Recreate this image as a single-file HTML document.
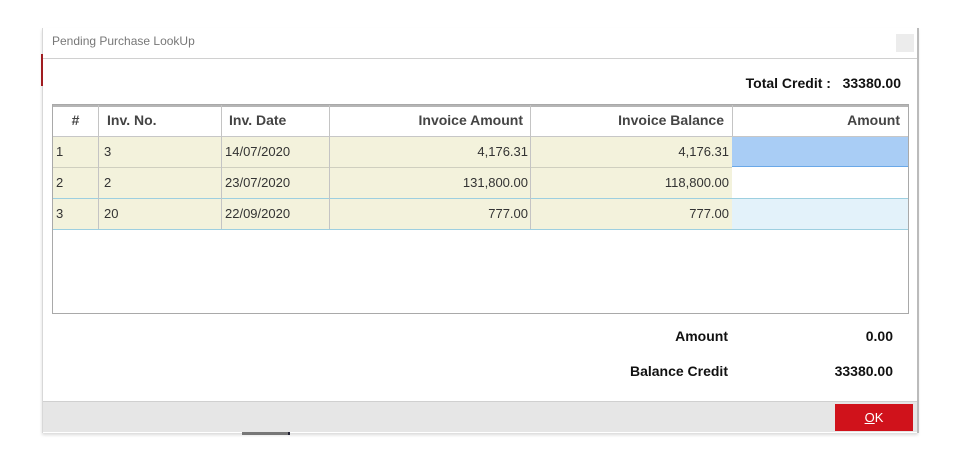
<!DOCTYPE html>
<html><head><meta charset="utf-8"><style>
*{margin:0;padding:0;box-sizing:border-box}
body{width:961px;height:462px;background:#fff;position:relative;overflow:hidden;font-family:"Liberation Sans",Arial,sans-serif}
.a{position:absolute}
.t{font-size:13px;color:#333;line-height:31px;white-space:nowrap}
.h{font-size:14px;font-weight:bold;color:#444;line-height:31px}
.b{font-weight:bold;font-size:14px;color:#111}
</style></head><body>
<!-- dialog -->
<div class="a" style="left:42px;top:28px;width:876px;height:405px;background:#fff;border-left:1px solid #d8d8d8;border-right:1px solid #cfcfcf;box-shadow:0 2px 3px rgba(0,0,0,.15)"></div>
<div class="a" style="left:41px;top:54px;width:2px;height:32px;background:#a01c20"></div>
<div class="a" style="left:52px;top:34px;font-size:12px;color:#777">Pending Purchase LookUp</div>
<div class="a" style="left:896px;top:34px;width:18px;height:18px;background:#ececec"></div>
<div class="a" style="left:43px;top:58px;width:874px;height:1px;background:#d0d0d0"></div>
<div class="a" style="left:917px;top:28px;width:2px;height:405px;background:#bbb"></div>
<div class="a b" style="right:60px;top:75px">Total Credit :&nbsp;&nbsp;&nbsp;33380.00</div>

<!-- table -->
<div class="a" style="left:52px;top:104px;width:857px;height:210px;border:1px solid #a9a9a9;background:#fff"></div>
<div class="a" style="left:53px;top:105px;width:855px;height:2px;background:#b5b5b5"></div>
<!-- rows backgrounds -->
<div class="a" style="left:53px;top:136px;width:679px;height:93px;background:#f3f2dc"></div>
<div class="a" style="left:732px;top:136px;width:176px;height:31px;background:#a9cdf5;border-bottom:1px solid #6aa8e8"></div>
<div class="a" style="left:732px;top:198px;width:176px;height:31px;background:#e3f2fa"></div>
<!-- row lines -->
<div class="a" style="left:53px;top:136px;width:855px;height:1px;background:#c7c7c7"></div>
<div class="a" style="left:53px;top:167px;width:679px;height:1px;background:#cfcfbf"></div>
<div class="a" style="left:53px;top:198px;width:855px;height:1px;background:#9dcfe0"></div>
<div class="a" style="left:53px;top:229px;width:855px;height:1px;background:#9dcfe0"></div>
<!-- col lines -->
<div class="a" style="left:98px;top:105px;width:1px;height:124px;background:#c4c4c4"></div>
<div class="a" style="left:221px;top:105px;width:1px;height:124px;background:#c4c4c4"></div>
<div class="a" style="left:329px;top:105px;width:1px;height:124px;background:#c4c4c4"></div>
<div class="a" style="left:530px;top:105px;width:1px;height:124px;background:#c4c4c4"></div>
<div class="a" style="left:732px;top:105px;width:1px;height:31px;background:#c4c4c4"></div>
<!-- headers -->
<div class="a h" style="left:53px;width:45px;top:105px;text-align:center">#</div>
<div class="a h" style="left:107px;top:105px">Inv. No.</div>
<div class="a h" style="left:229px;top:105px">Inv. Date</div>
<div class="a h" style="left:330px;width:193px;top:105px;text-align:right">Invoice Amount</div>
<div class="a h" style="left:531px;width:193px;top:105px;text-align:right">Invoice Balance</div>
<div class="a h" style="left:733px;width:167px;top:105px;text-align:right">Amount</div>
<!-- row 1 -->
<div class="a t" style="left:56px;top:136px">1</div>
<div class="a t" style="left:104px;top:136px">3</div>
<div class="a t" style="left:225px;top:136px">14/07/2020</div>
<div class="a t" style="left:330px;width:198px;top:136px;text-align:right">4,176.31</div>
<div class="a t" style="left:531px;width:198px;top:136px;text-align:right">4,176.31</div>
<!-- row 2 -->
<div class="a t" style="left:56px;top:167px">2</div>
<div class="a t" style="left:104px;top:167px">2</div>
<div class="a t" style="left:225px;top:167px">23/07/2020</div>
<div class="a t" style="left:330px;width:198px;top:167px;text-align:right">131,800.00</div>
<div class="a t" style="left:531px;width:198px;top:167px;text-align:right">118,800.00</div>
<!-- row 3 -->
<div class="a t" style="left:56px;top:198px">3</div>
<div class="a t" style="left:104px;top:198px">20</div>
<div class="a t" style="left:225px;top:198px">22/09/2020</div>
<div class="a t" style="left:330px;width:198px;top:198px;text-align:right">777.00</div>
<div class="a t" style="left:531px;width:198px;top:198px;text-align:right">777.00</div>

<!-- totals -->
<div class="a b" style="right:233px;top:328px">Amount</div>
<div class="a b" style="right:68px;top:328px">0.00</div>
<div class="a b" style="right:233px;top:363px">Balance Credit</div>
<div class="a b" style="right:68px;top:363px">33380.00</div>

<!-- footer -->
<div class="a" style="left:43px;top:401px;width:874px;height:31px;background:#e6e6e6;border-top:1px solid #d0d0d0"></div>
<div class="a" style="left:835px;top:404px;width:78px;height:27px;background:#d0121b;color:#fff;font-size:13px;line-height:27px;text-align:center"><u>O</u>K</div>
<div class="a" style="left:242px;top:432px;width:46px;height:3px;background:#777"></div>
<div class="a" style="left:288px;top:432px;width:2px;height:3px;background:#223"></div>
</body></html>
